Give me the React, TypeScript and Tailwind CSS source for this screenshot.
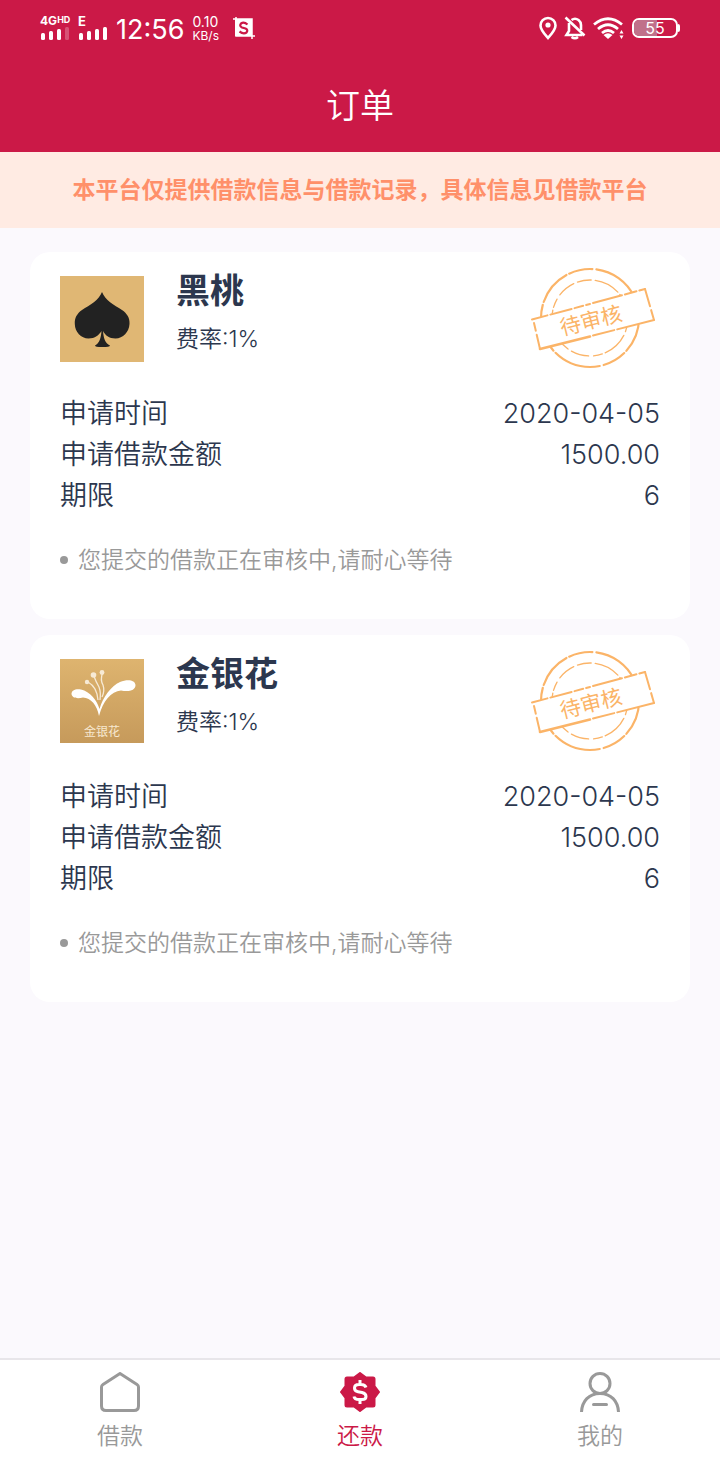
import type { ReactNode } from "react";

type Order = {
  id: string;
  name: string;
  rate: string;
  date: string;
  amount: string;
  term: string;
  logo: ReactNode;
};

function SpadeLogo() {
  return (
    <svg viewBox="0 0 84 86" className="h-[86px] w-[84px]" aria-hidden="true">
      <rect width="84" height="86" fill="#e0b774" />
      <path
        d="M42 16C45 24 54 29 62 34C67 37.500 70 42 69.500 48C69 56 63 62.500 55.500 62.500C49 62.500 45 59 43 55C43.500 62 45 67 50 69.500Q50 71 42 71Q35 71 35 69.500C39.500 67 41 62 41.500 55C39 59 35 62.500 28.500 62.500C21 62.500 15 56 14.800 48C14.500 42 17 37.500 22 34C30 29 39 24 42 16Z"
        fill="#222"
      />
    </svg>
  );
}

function HoneysuckleLogo() {
  return (
    <svg viewBox="0 0 84 84" className="h-[84px] w-[84px]" aria-hidden="true">
      <defs>
        <linearGradient id="gold" x1="0" y1="0" x2="0" y2="1">
          <stop offset="0" stopColor="#deb46f" />
          <stop offset="1" stopColor="#c69a5b" />
        </linearGradient>
      </defs>
      <rect width="84" height="84" fill="url(#gold)" />
      <path
        d="M39 57C37 46 31 39 23 38.500C17 40 12 39 11.500 35C11.500 31 16 29.500 21 30.500C30 32.500 37 41 39.500 50C43 38 51 27 60 23C67 20 75 20.500 75.500 26C75.500 32 68 33 61 31.500C51 32.500 43 42 39 57Z"
        fill="#fff"
      />
      <g fill="none" stroke="#f7ead5" strokeWidth="1.300">
        <path d="M28 23Q37 28 38 41" />
        <path d="M33.500 16Q36 23 39 28Q41 33 40 41" />
        <path d="M42.500 14Q40 21 43 26Q45 32 42 38" />
      </g>
      <g fill="#f7ead5">
        <circle cx="27" cy="23" r="2.200" />
        <circle cx="33.500" cy="16" r="2.800" />
        <circle cx="42" cy="13.500" r="2.400" />
      </g>
      <text
        x="42"
        y="77"
        textAnchor="middle"
        fontSize="12"
        fontWeight="400"
        fill="#f7e8d0"
      >
        金银花
      </text>
    </svg>
  );
}

function PendingStamp() {
  return (
    <svg
      viewBox="10 11 126 104"
      className="mr-1 ml-auto h-[104px] w-[126px] shrink-0"
      role="img"
      aria-label="待审核"
    >
      <g fill="none" stroke="#fbb468" strokeLinecap="round">
        <circle cx="70" cy="63" r="49" strokeWidth="2.200" strokeDasharray="36 3 24 4 48 3 14 5 30 3" />
        <circle cx="70" cy="63" r="38" strokeWidth="1.300" strokeDasharray="14 4 26 3 9 5 18 4" />
      </g>
      <path d="M12.500 64L125 34L134.500 65L20 94Z" fill="#fff" />
      <g fill="none" stroke="#fbb468" strokeWidth="2" strokeLinecap="round">
        <path d="M12 64.500L70 49" strokeDasharray="16 3 22 3 9 3" />
        <path d="M73 48L125 34" strokeDasharray="30 3 12 3" />
        <path d="M125 34L134 65" strokeDasharray="18 4" />
        <path d="M134 65L73 80.500" strokeDasharray="38 3" />
        <path d="M70 81.500L20 94" strokeWidth="2.600" />
        <path d="M14 68L20 94" strokeDasharray="8 4 14 3" />
      </g>
      <text
        x="71"
        y="73"
        textAnchor="middle"
        fontSize="21"
        fontWeight="400"
        fill="#fbb468"
        transform="rotate(-14 71 66)"
      >
        待审核
      </text>
    </svg>
  );
}

function SignalBars({ weak }: { weak?: boolean }) {
  return (
    <svg viewBox="0 0 30 14" className="h-[14px] w-[30px]" fill="#fff" aria-hidden="true">
      <rect x="1" y="6" width="4" height="7" rx="1.500" />
      <rect x="9" y="4" width="4" height="9" rx="1.500" />
      <rect x="17" y="2" width="4" height="11" rx="1.500" />
      <rect x="25" y="0" width="4" height="13" rx="1.500" opacity={weak ? 0.25 : 1} />
    </svg>
  );
}

function StatusBar() {
  return (
    <div className="flex h-14 items-center px-10">
      <div className="flex w-[30px] flex-col">
        <span className="flex h-3 items-start text-xs leading-3 font-bold">
          4G<span className="text-[9px] leading-[9px]">HD</span>
        </span>
        <SignalBars weak />
      </div>
      <div className="ml-2 flex flex-col">
        <span className="h-3 text-[13px] leading-3 font-bold">E</span>
        <SignalBars />
      </div>
      <span className="ml-2 pt-1 text-[27px] leading-8 font-normal">12:56</span>
      <span className="ml-2 flex w-8 flex-col pt-[2px] font-normal">
        <span className="text-sm leading-[14px]">0.10</span>
        <span className="text-xs leading-[14px]">KB/s</span>
      </span>
      <svg viewBox="0 0 24 24" className="ml-2 h-6 w-6" aria-hidden="true">
        <path d="M4 1V5M1 3H20V23M4 4V20H23" fill="none" stroke="#fff" strokeWidth="1.500" />
        <rect x="3" y="3" width="17" height="17" fill="#fff" />
        <path
          d="M15.500 8.500Q12 5.500 9 7.500Q7 10 10 11.500L13.500 12.500Q16.500 14 14.500 16.500Q11.500 18.500 7.500 15.500"
          fill="none"
          stroke="#cb1947"
          strokeWidth="2.200"
        />
      </svg>

      <div className="ml-auto flex items-center gap-[7px]">
        <svg viewBox="0 0 18 24" className="h-6 w-[18px]" aria-hidden="true">
          <path
            d="M9 22C6 18.500 1.500 14 1.500 9.500A7.500 7.500 0 0 1 16.500 9.500C16.500 14 12 18.500 9 22Z"
            fill="none"
            stroke="#fff"
            strokeWidth="2.600"
          />
          <circle cx="9" cy="9" r="2.600" fill="#fff" />
        </svg>
        <svg viewBox="0 0 22 24" className="h-6 w-[22px]" fill="none" stroke="#fff" strokeWidth="2.600" aria-hidden="true">
          <path d="M5 7V15L2.500 19H18.500M7.500 4Q11 1.500 14.500 4Q17 6 17 9V14" />
          <path d="M1.500 1.500L20.500 19.500" />
          <path d="M7.500 21Q11 23.500 14 21" />
        </svg>
        <svg viewBox="0 0 32 24" className="h-6 w-8" aria-hidden="true">
          <g fill="none" stroke="#fff" strokeWidth="2.800">
            <path d="M1 8.500Q15 -3 29 8.500" />
            <path d="M5 13Q15 4.500 25 13" />
            <path d="M9 17Q15 12 21 17" />
          </g>
          <path d="M15 23L10.500 19Q15 15.500 19.500 19Z" fill="#fff" />
          <path d="M28.500 14L30.500 17.500H26.500ZM28.500 23L30.500 19.500H26.500Z" fill="#fff" />
        </svg>
        <div className="flex items-center">
          <span className="relative flex h-5 w-[46px] items-center justify-center overflow-hidden rounded-[7px] border-2 border-white">
            <span className="absolute inset-y-0 left-0 w-[55%] bg-[#c0708a]" />
            <span className="relative text-base leading-4 font-normal">55</span>
          </span>
          <span className="h-2 w-[2px] rounded-r bg-white" />
        </div>
      </div>
    </div>
  );
}

const orders: Order[] = [
  {
    id: "heitao",
    name: "黑桃",
    rate: "1%",
    date: "2020-04-05",
    amount: "1500.00",
    term: "6",
    logo: <SpadeLogo />,
  },
  {
    id: "jinyinhua",
    name: "金银花",
    rate: "1%",
    date: "2020-04-05",
    amount: "1500.00",
    term: "6",
    logo: <HoneysuckleLogo />,
  },
];

function Row({ label, value }: { label: string; value: string }) {
  return (
    <div className="flex h-[41px] items-center justify-between text-[27px] leading-[41px]">
      <dt>{label}</dt>
      <dd>{value}</dd>
    </div>
  );
}

function OrderCard({ order }: { order: Order }) {
  return (
    <article className="rounded-[20px] bg-white px-[30px] pt-[14px] pb-[39px] text-[#2c374e]">
      <div className="flex items-start">
        <div className="mt-[10px] shrink-0">{order.logo}</div>
        <div className="ml-8 pt-[5px]">
          <h2 className="text-[34px] leading-10 font-bold">{order.name}</h2>
          <p className="mt-3 text-[23px] leading-8">费率:{order.rate}</p>
        </div>
        <PendingStamp />
      </div>
      <dl className="mt-[23px]">
        <Row label="申请时间" value={order.date} />
        <Row label="申请借款金额" value={order.amount} />
        <Row label="期限" value={order.term} />
      </dl>
      <p className="mt-6 flex items-center text-[23px] leading-10 text-[#999]">
        <span className="mr-[10px] h-2 w-2 rounded-full bg-[#999]" />
        您提交的借款正在审核中,请耐心等待
      </p>
    </article>
  );
}

function HomeIcon() {
  return (
    <svg viewBox="0 0 40 40" className="h-10 w-10" fill="none" stroke="#999" strokeWidth="3" strokeLinejoin="round" aria-hidden="true">
      <path d="M20 1.500L37 12.500Q38.500 13.500 38.500 15V34Q38.500 38.500 34 38.500H6Q1.500 38.500 1.500 34V15Q1.500 13.500 3 12.500Z" />
    </svg>
  );
}

function RepayIcon() {
  return (
    <svg viewBox="0 0 40 40" className="h-10 w-10" aria-hidden="true">
      <path
        d="M20 1L26 5.500H33Q34.500 5.500 34.500 7V14L39 20L34.500 26V33Q34.500 34.500 33 34.500H26L20 39L14 34.500H7Q5.500 34.500 5.500 33V26L1 20L5.500 14V7Q5.500 5.500 7 5.500H14Z"
        fill="#cb1947"
        stroke="#cb1947"
        strokeWidth="2"
        strokeLinejoin="round"
      />
      <path
        d="M20 8V12M20 28V32M26 15.500Q25 12.500 21 12.500H19Q14.500 12.500 14.500 16Q14.500 19 18 19.700L22 20.500Q26 21.500 26 24.500Q26 27.500 22 27.500H19Q14.500 27.500 14 24.500"
        fill="none"
        stroke="#fff"
        strokeWidth="3"
      />
    </svg>
  );
}

function MineIcon() {
  return (
    <svg viewBox="0 0 40 40" className="h-10 w-10" fill="none" stroke="#999" strokeWidth="3" aria-hidden="true">
      <circle cx="20" cy="11.500" r="10" />
      <path d="M1.500 40C2 29 9 21.500 20 21.500S38 29 38.500 40" />
      <path d="M13.500 32.500H26.500" strokeLinecap="round" />
    </svg>
  );
}

const tabs = [
  { label: "借款", icon: <HomeIcon />, active: false },
  { label: "还款", icon: <RepayIcon />, active: true },
  { label: "我的", icon: <MineIcon />, active: false },
];

export default function App() {
  return (
    <div className="flex min-h-screen flex-col bg-[#fbf9fd] font-['Inter','Noto_Sans_CJK_SC',sans-serif] font-[350]">
      <header className="bg-[#cb1947] text-white">
        <StatusBar />
        <h1 className="pt-[26px] pb-[22px] text-center text-[34px] leading-[48px]">订单</h1>
      </header>
      <p className="bg-[#ffebe3] py-[18px] text-center text-[23px] leading-10 font-bold text-[#ff906a]">
        本平台仅提供借款信息与借款记录，具体信息见借款平台
      </p>

      <main className="flex flex-1 flex-col gap-4 px-[30px] py-6">
        {orders.map((order) => (
          <OrderCard key={order.id} order={order} />
        ))}
      </main>

      <nav className="grid grid-cols-3 border-t-2 border-[#e8e6ea] bg-white" aria-label="主导航">
        {tabs.map((tab) => (
          <a
            key={tab.label}
            href="#"
            aria-current={tab.active ? "page" : undefined}
            className={`flex h-[100px] flex-col items-center pt-3 text-[23px] leading-8 ${
              tab.active ? "text-[#cb1947]" : "text-[#999]"
            }`}
          >
            {tab.icon}
            <span className="mt-2">{tab.label}</span>
          </a>
        ))}
      </nav>
    </div>
  );
}
